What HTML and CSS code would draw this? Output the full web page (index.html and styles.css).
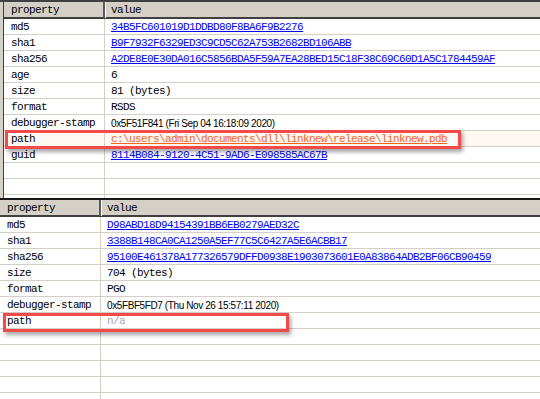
FILE: index.html
```html
<!DOCTYPE html>
<html>
<head>
<meta charset="utf-8">
<link rel="stylesheet" href="styles.css">
</head>
<body>
<div class="page">
  <div class="pane pane-top">
    <div class="sheet">
      <div class="hdr"><div class="hcell hk">property</div><div class="hcell hv">value</div></div>
      <div class="row"><div class="k">md5</div><div class="v"><a class="lnk">34B5FC601019D1DDBD80F8BA6F9B2276</a></div></div>
      <div class="row"><div class="k">sha1</div><div class="v"><a class="lnk">B9F7932F6329ED3C9CD5C62A753B2682BD106ABB</a></div></div>
      <div class="row"><div class="k">sha256</div><div class="v"><a class="lnk">A2DE8E0E30DA016C5856BDA5F59A7EA28BED15C18F38C69C60D1A5C1784459AF</a></div></div>
      <div class="row"><div class="k">age</div><div class="v">6</div></div>
      <div class="row"><div class="k">size</div><div class="v">81 (bytes)</div></div>
      <div class="row"><div class="k">format</div><div class="v">RSDS</div></div>
      <div class="row"><div class="k">debugger-stamp</div><div class="v stamp">0x5F51F841 (Fri Sep 04 16:18:09 2020)</div></div>
      <div class="row sel"><div class="k">path</div><div class="v"><a class="lnk orange">c:\users\admin\documents\dll\linknew\release\linknew.pdb</a></div></div>
      <div class="row"><div class="k">guid</div><div class="v"><a class="lnk">8114B084-9120-4C51-9AD6-E098585AC67B</a></div></div>
      <div class="row"><div class="k"></div><div class="v"></div></div>
      <div class="row"><div class="k"></div><div class="v"></div></div>
      <div class="row"><div class="k"></div><div class="v"></div></div>
    </div>
  </div>
  <div class="pane pane-bottom">
    <div class="hdr"><div class="hcell hk">property</div><div class="hcell hv">value</div></div>
    <div class="row"><div class="k">md5</div><div class="v"><a class="lnk">D98ABD18D94154391BB6EB0279AED32C</a></div></div>
    <div class="row"><div class="k">sha1</div><div class="v"><a class="lnk">3388B148CA0CA1250A5EF77C5C6427A5E6ACBB17</a></div></div>
    <div class="row"><div class="k">sha256</div><div class="v"><a class="lnk">95100E461378A177326579DFFD0938E1903073601E0A83864ADB2BF06CB90459</a></div></div>
    <div class="row"><div class="k">size</div><div class="v">704 (bytes)</div></div>
    <div class="row"><div class="k">format</div><div class="v">PGO</div></div>
    <div class="row"><div class="k">debugger-stamp</div><div class="v stamp">0x5FBF5FD7 (Thu Nov 26 15:57:11 2020)</div></div>
    <div class="row"><div class="k">path</div><div class="v na">n/a</div></div>
    <div class="row"><div class="k"></div><div class="v"></div></div>
    <div class="row"><div class="k"></div><div class="v"></div></div>
    <div class="row"><div class="k"></div><div class="v"></div></div>
    <div class="row"><div class="k"></div><div class="v"></div></div>
    <div class="row"><div class="k"></div><div class="v"></div></div>
  </div>
  <div class="mark mark-top"></div>
  <div class="mark mark-bottom"></div>
</div>
</body>
</html>
```

FILE: styles.css
```css
* { box-sizing: border-box; }
html, body { margin: 0; padding: 0; background: #fff; }
.page {
  position: relative;
  width: 540px;
  height: 399px;
  overflow: hidden;
  font-family: "Liberation Mono", "DejaVu Sans Mono", monospace;
  font-size: 11px;
  letter-spacing: -0.6px;
  color: #000;
}
.pane { overflow: hidden; background: #fff; }
.pane-top {
  height: 198px;
  border-top: 2px solid #404040;
  padding-left: 3px;
  background: #d4d0c8;
}
.sheet {
  height: 100%;
  border-left: 1px solid #404040;
  background: #fff;
  overflow: hidden;
}
.pane-bottom {
  height: 201px;
  border-top: 2px solid #1a1a1a;
}
.hdr {
  display: grid;
  grid-template-columns: 101px 1fr;
  height: 17px;
  background: #d4d0c8;
  border-bottom: 2px solid #404040;
}
.hcell {
  display: flex;
  align-items: center;
  line-height: 15px;
  padding-top: 1px;
  white-space: nowrap;
}
.hk { padding-left: 7px; box-shadow: inset -2px 0 #5a5a5a; }
.hv { padding-left: 6px; box-shadow: inset 1px 0 #ffffff; }
.row {
  display: grid;
  grid-template-columns: 101px 1fr;
  height: 16px;
  border-bottom: 1px solid #d4d0c8;
}
.k {
  padding-left: 7px;
  padding-top: 1px;
  border-right: 1px solid #d4d0c8;
  line-height: 15px;
  white-space: nowrap;
}
.v {
  padding-left: 6px;
  padding-top: 1px;
  line-height: 15px;
  white-space: nowrap;
}
.lnk { color: #0000ff; text-decoration: underline; text-underline-offset: 1px; }
.orange { color: #f26522; }
.sel { background: #fdf8f3; }
.stamp {
  font-family: "Liberation Sans", "DejaVu Sans", sans-serif;
  font-size: 10px;
  letter-spacing: -0.4px;
}
.na { color: #a8a8a8; }
.mark {
  position: absolute;
  border: 3px solid #f24a4a;
  box-shadow: 2px 3px 4px rgba(0, 0, 0, 0.35);
}
.mark-top { left: 5px; top: 130px; width: 456px; height: 19px; }
.mark-bottom { left: 3px; top: 313px; width: 286px; height: 19px; }
```
